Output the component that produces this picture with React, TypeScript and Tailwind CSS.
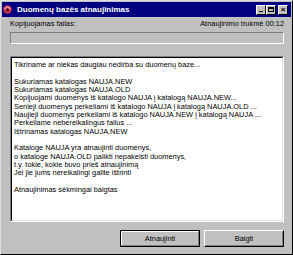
import React from "react";

const font = { fontFamily: '"Liberation Sans", Arial, sans-serif' };

const lines = [
  "Tikriname ar niekas daugiau nedirba su duomenų baze...",
  "",
  "Sukuriamas katalogas NAUJA.NEW",
  "Sukuriamas katalogas NAUJA.OLD",
  "Kopijuojami duomenys iš katalogo NAUJA į katalogą NAUJA.NEW...",
  "Senieji duomenys perkeliami iš katalogo NAUJA į katalogą NAUJA.OLD ...",
  "Naujieji duomenys perkeliami iš katalogo NAUJA.NEW į katalogą NAUJA ...",
  "Perkeliame nebereikalingus failus ...",
  "Ištrinamas katalogas NAUJA.NEW",
  "",
  "Kataloge NAUJA yra atnaujinti duomenys,",
  "o kataloge NAUJA.OLD palikti nepakeisti duomenys,",
  "t.y. tokie, kokie buvo prieš atnaujinimą",
  "Jei jie jums nereikalingi galite ištrinti",
  "",
  "Atnaujinimas sėkmingai baigtas",
];

function CaptionButton({ children }: { children: React.ReactNode }) {
  return (
    <div className="w-[10px] h-[10px] bg-[#c0c0c0] border border-t-white border-l-white border-r-black border-b-black flex items-center justify-center">
      {children}
    </div>
  );
}

export default function App() {
  return (
    <div
      className="w-[293px] h-[255px] bg-[#c0c0c0] border border-t-[#dfdfdf] border-l-[#dfdfdf] border-r-black border-b-black p-[1px] flex flex-col text-black"
      style={font}
    >
      <div className="h-[15px] bg-[#000080] flex items-center pl-[1px] pr-[3px]">
        <svg width="9" height="9" viewBox="0 0 9 9">
          <circle cx="4.5" cy="4.5" r="4.2" fill="#d8304a" />
          <path d="M2 4.5 A2.5 2.5 0 0 1 7 4.5" fill="none" stroke="#ffd0d0" strokeWidth="1" />
          <circle cx="4.5" cy="5" r="1.6" fill="#401020" />
        </svg>
        <span className="ml-[5px] text-white font-bold text-[8px] leading-none">
          Duomenų bazės atnaujinimas
        </span>
        <div className="flex-1" />
        <div className="flex items-center">
          <CaptionButton>
            <div className="w-[4px] h-[1.5px] bg-black mt-[4px]" />
          </CaptionButton>
          <CaptionButton>
            <div className="w-[6px] h-[5px] border border-black border-t-2" />
          </CaptionButton>
          <div className="w-[2px]" />
          <CaptionButton>
            <span className="text-[8px] leading-none font-bold">×</span>
          </CaptionButton>
        </div>
      </div>

      <div className="flex flex-col pl-[8px] pr-[7px] text-[7.4px]">
        <div className="mt-[2px] h-[10px] leading-[10px] flex justify-between">
          <span>Kopijuojamas failas:</span>
          <span>Atnaujinimo trukmė 00:12</span>
        </div>
        <div className="mt-[3px] h-[12px] border border-t-[#808080] border-l-[#808080] border-r-white border-b-white" />
        <div className="mt-[12px] h-[166px] border border-t-[#808080] border-l-[#808080] border-r-white border-b-white">
          <div className="h-full bg-white border border-t-black border-l-black border-r-[#dfdfdf] border-b-[#dfdfdf] pt-[3px] pl-[2px] leading-[8.35px] whitespace-pre overflow-hidden">
            {lines.map((l, i) => (
              <div key={i} className="h-[8.35px]">
                {l}
              </div>
            ))}
          </div>
        </div>
        <div className="mt-[8px] flex justify-end gap-[4px]">
          <div className="w-[80px] h-[17px] border border-black">
            <div className="h-full border border-t-white border-l-white border-r-[#808080] border-b-[#808080] flex items-center justify-center">
              Atnaujinti
            </div>
          </div>
          <div className="w-[80px] h-[17px] border border-t-white border-l-white border-r-black border-b-black">
            <div className="h-full border border-transparent border-r-[#808080] border-b-[#808080] flex items-center justify-center">
              Baigti
            </div>
          </div>
        </div>
      </div>
    </div>
  );
}
